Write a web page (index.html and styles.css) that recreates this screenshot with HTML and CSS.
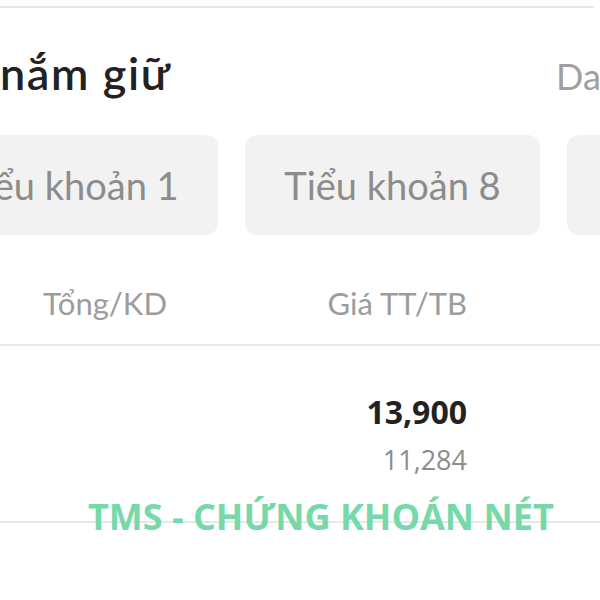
FILE: index.html
```html
<!DOCTYPE html>
<html lang="vi">
<head>
<meta charset="utf-8">
<link rel="stylesheet" href="styles.css">
</head>
<body>
<div class="screen">
  <div class="topline"></div>
  <div class="header">
    <h1 class="title">nắm giữ</h1>
    <span class="side">Da</span>
  </div>
  <div class="tabs">
    <div class="tab">Tiểu khoản 1</div>
    <div class="tab">Tiểu khoản 8</div>
    <div class="tab"></div>
  </div>
  <div class="table">
    <div class="row head">
      <div class="cell">Tổng/KD</div>
      <div class="cell">Giá TT/TB</div>
    </div>
    <div class="row data">
      <div class="cell"></div>
      <div class="cell">
        <div class="num-main">13,900</div>
        <div class="num-sub">11,284</div>
      </div>
    </div>
    <div class="watermark">TMS - CHỨNG KHOÁN NÉT</div>
  </div>
</div>
</body>
</html>
```

FILE: styles.css
```css
html, body {
  margin: 0;
  padding: 0;
  background: #ffffff;
}
body {
  width: 600px;
  height: 600px;
  overflow: hidden;
  font-family: "Lato", "Noto Sans", sans-serif;
}
.screen {
  width: 600px;
  height: 600px;
  overflow: hidden;
}
.topline {
  height: 6px;
  border-bottom: 2px solid #e6e6e6;
  margin-right: 6px;
}
.header {
  display: flex;
  justify-content: space-between;
  align-items: baseline;
  height: 70px;
  padding-top: 30px;
}
.title {
  margin: 0;
  font-size: 45px;
  font-weight: 600;
  color: #222222;
  line-height: 70px;
  letter-spacing: 1.6px;
}
.side {
  font-size: 36px;
  color: #a0a0a0;
  width: 44px;
  overflow: hidden;
  white-space: nowrap;
}
.tabs {
  display: flex;
  gap: 27px;
  margin-left: -77px;
  margin-top: 27px;
}
.tab {
  flex: 0 0 295px;
  height: 100px;
  border-radius: 12px;
  background: #f2f2f2;
  color: #8c8c8c;
  font-size: 38px;
  display: flex;
  align-items: center;
  justify-content: center;
}
.table {
  position: relative;
  margin-left: -133px;
  width: 900px;
  margin-top: 35px;
}
.row {
  display: grid;
  grid-template-columns: 300px 300px;
  border-bottom: 2px solid #e8e8e8;
}
.row.head {
  height: 74px;
  align-items: center;
}
.cell {
  text-align: right;
}
.head .cell {
  font-size: 31px;
  color: #9c9c9c;
  padding-bottom: 8px;
}
.row.data {
  height: 175px;
  align-items: start;
}
.num-main {
  margin-top: 46px;
  font-family: "Open Sans", "Noto Sans", sans-serif;
  font-weight: 700;
  font-size: 32px;
  color: #222222;
  line-height: 40px;
}
.num-sub {
  margin-top: 10px;
  font-family: "Open Sans", "Noto Sans", sans-serif;
  font-size: 27px;
  color: #8c8c8c;
  line-height: 36px;
}
.watermark {
  position: absolute;
  left: 221px;
  top: 222px;
  font-family: "Open Sans", "Noto Sans", sans-serif;
  font-weight: 700;
  font-size: 36px;
  color: #70d8a6;
  white-space: nowrap;
  opacity: 0.95;
}
```
